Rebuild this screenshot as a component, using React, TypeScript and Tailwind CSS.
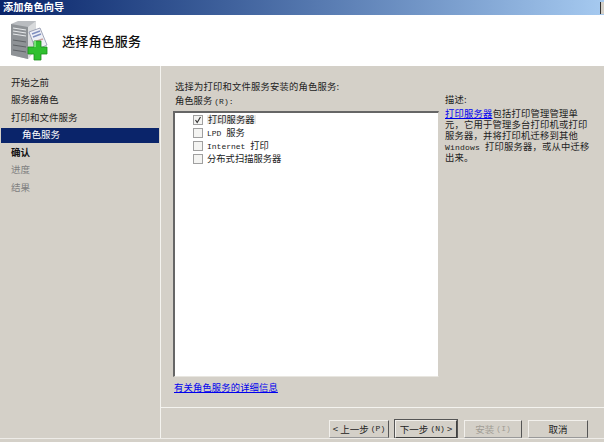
import type { ReactNode } from "react";

const font = { fontFamily: '"Noto Sans CJK SC", sans-serif' };

const steps = [
  { label: "开始之前", cls: "text-[#222]" },
  { label: "服务器角色", cls: "text-[#222]" },
  { label: "打印和文件服务", cls: "text-[#222]" },
  { label: "角色服务", cls: "bg-[#0a246a] text-white pl-[21px]" },
  { label: "确认", cls: "text-[#111] font-bold" },
  { label: "进度", cls: "text-[#808080]" },
  { label: "结果", cls: "text-[#808080]" },
];

// latin text in the reference is a small fixed-width face
const Mono = ({ children }: { children: ReactNode }) => (
  <span className="text-[8px] leading-none whitespace-pre font-['Liberation_Mono',monospace]">{children}</span>
);

const services: { label: ReactNode; checked: boolean }[] = [
  { label: "打印服务器", checked: true },
  { label: <><Mono>{"LPD "}</Mono>服务</>, checked: false },
  { label: <><Mono>{"Internet "}</Mono>打印</>, checked: false },
  { label: "分布式扫描服务器", checked: false },
];

const WizardIcon = () => (
  <svg width="38" height="40" viewBox="0 0 38 40" className="shrink-0">
    <path d="M1 3 L8 0 L26 0 L26 28 L18 38 L1 34 Z" fill="#b9bcc0" />
    <path d="M1 3 L18 6 L18 38 L1 34 Z" fill="#8e9296" />
    <path d="M18 6 L26 0 L26 28 L18 38 Z" fill="#d8dadc" />
    <path d="M3 7 L16 9 M3 10 L16 12 M3 13 L16 15" stroke="#e6e8ea" strokeWidth="1.2" />
    <path d="M3 19 L16 21 M3 24 L16 26 M3 29 L16 31" stroke="#5e6266" strokeWidth="1" />
    <path d="M19 11 L30 7 L37 24 L26 29 Z" fill="#eef0f6" stroke="#8a90a8" strokeWidth="0.8" />
    <path d="M22 13 L30 10 M23 16 L31 13" stroke="#7f8fc0" strokeWidth="1.5" />
    <path d="M24 21 L33 18" stroke="#c9a0a0" strokeWidth="1.5" />
    <path d="M24 26 H30 V20 H37 V26 H43 V33 H37 V39 H30 V33 H24 Z" transform="translate(-6 0)" fill="#2fc02f" stroke="#1a8f1a" strokeWidth="0.8" />
    <path d="M25 20 V26" stroke="#8cf08c" strokeWidth="1.5" />
  </svg>
);

const Button = ({ children, width, primary, disabled }: { children: ReactNode; width: string; primary?: boolean; disabled?: boolean }) => (
  <div
    className={`${width} h-[18px] flex items-center justify-center text-[9.5px] whitespace-pre border border-t-[#f2f0ec] border-l-[#f2f0ec] ${
      primary ? "border-[#404040] outline outline-1 outline-[#555]" : "border-r-[#555] border-b-[#999]"
    } ${disabled ? "text-[#a09c94]" : "text-[#222]"}`}
  >
    {children}
  </div>
);

export default function App() {
  return (
    <div className="w-[604px] h-[442px] flex flex-col overflow-hidden bg-[#d4d0c8]" style={font}>
      <div className="h-[15px] flex items-center justify-between bg-gradient-to-r from-[#0a246a] to-[#a6caf0] pl-[3px]">
        <span className="text-white text-[10.2px] font-bold leading-none">添加角色向导</span>
        <div className="w-[4px] h-[12px] bg-[#d4d0c8] border-l border-[#333]" />
      </div>

      <div className="h-[51px] bg-white flex items-center pl-[10px] gap-[14px]">
        <WizardIcon />
        <span className="text-[13px] tracking-[0.2px] font-medium text-[#111]">选择角色服务</span>
      </div>

      <div className="flex-1 flex min-h-0">
        <div className="w-[160px] shrink-0 pt-[9px] flex flex-col bg-[#d4d0c8] text-[9.5px]">
          {steps.map((s) => (
            <div key={s.label} className={`h-[15px] mb-[2.5px] pl-[10px] mx-[1px] flex items-center leading-none ${s.cls}`}>
              {s.label}
            </div>
          ))}
        </div>

        <div className="flex-1 flex flex-col border-l border-[#f4f3ef] min-w-0">
          <div className="flex-1 flex min-h-0 pt-[13px] pl-[12px] text-[#222]">
            <div className="w-[266px] shrink-0 flex flex-col">
              <div className="text-[9.3px] tracking-[0.2px] leading-[14px] ml-[2px]">选择为打印和文件服务安装的角色服务:</div>
              <div className="text-[9.3px] leading-[14px] ml-[2px]">
                角色服务 <Mono>(R):</Mono>
              </div>
              <div className="h-[266px] mt-[4px] bg-white border-l-2 border-t-2 border-[#666] border-r border-r-[#d4d0c8] border-b border-b-[#e8e6e0] pl-[18px]">
                {services.map((s, i) => (
                  <div key={i} className="h-[13px] flex items-center gap-[4px]">
                    <div className="w-[10px] h-[10px] border border-[#a0a0a0] bg-[#f4f4f2] flex items-center justify-center shrink-0">
                      {s.checked && (
                        <svg width="8" height="8" viewBox="0 0 8 8">
                          <path d="M1.5 4 L3.2 6.5 L6.5 1" fill="none" stroke="#333" strokeWidth="1.2" />
                        </svg>
                      )}
                    </div>
                    <span className={`text-[9.3px] leading-none whitespace-nowrap ${s.checked ? "bg-[#e8e8e8] px-[1px]" : ""}`}>{s.label}</span>
                  </div>
                ))}
              </div>
              <div className="mt-[4px] ml-[1px] text-[9.3px] tracking-[0.15px] leading-[12px] text-[#0000ee] underline">有关角色服务的详细信息</div>
            </div>

            <div className="ml-[6px] w-[152px] text-[9.3px] tracking-[0.2px] leading-[11px] mt-[15px] whitespace-nowrap">
              <div className="mb-[3px]">描述:</div>
              <p>
                <span className="text-[#0000ee] underline">打印服务器</span>包括打印管理管理单
                <br />
                {"元\uFF0C它用于管理多台打印机或打印"}
                <br />
                {"服务器\uFF0C并将打印机迁移到其他"}
                <br />
                <Mono>{"Windows "}</Mono>
                {"打印服务器\uFF0C或从中迁移"}
                <br />
                {"出来\u3002"}
              </p>
            </div>
          </div>

          <div className="h-[31px] border-t border-[#f4f3ef] flex items-start pt-[12px] pl-[168px]">
            <div className="flex">
              <Button width="w-[60px]">{"< 上一步 "}<Mono>(P)</Mono></Button>
              <div className="w-[6px]" />
              <Button width="w-[62px]" primary>{"下一步 "}<Mono>(N)</Mono>{" >"}</Button>
              <div className="w-[7px]" />
              <Button width="w-[58px]" disabled>{"安装 "}<Mono>(I)</Mono></Button>
              <div className="w-[6px]" />
              <Button width="w-[60px]">取消</Button>
            </div>
          </div>
        </div>
      </div>
      <div className="h-[4px] border-t border-[#eeece8]" />
    </div>
  );
}
